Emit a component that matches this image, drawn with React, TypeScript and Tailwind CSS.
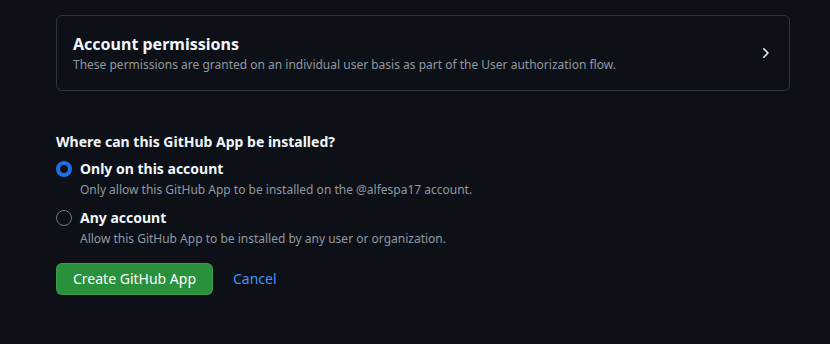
export default function App() {
    return (
        <div className="min-h-[344px] w-[830px] bg-[#0d1117] font-['Noto_Sans',sans-serif] text-[#e6edf3]">
            <div className="pl-[56px] pr-[40px] pt-[15px]">
                <div className="flex items-center justify-between rounded-md border border-[#30363d] px-4 h-[76px]">
                    <div className="flex flex-col">
                        <div className="text-base font-bold leading-6 text-[#f0f6fc]">Account permissions</div>
                        <div className="text-xs leading-[18px] text-[#9198a1]">These permissions are granted on an individual user basis as part of the User authorization flow.</div>
                    </div>
                    <svg className="w-4 h-4 text-[#f0f6fc]" viewBox="0 0 16 16" fill="currentColor">
                        <path d="M6.22 3.22a.75.75 0 0 1 1.06 0l4.25 4.25a.75.75 0 0 1 0 1.06l-4.25 4.25a.751.751 0 0 1-1.042-.018.751.751 0 0 1-.018-1.042L9.94 8 6.22 4.28a.75.75 0 0 1 0-1.06Z" />
                    </svg>
                </div>

                <div className="mt-[41px] text-sm font-bold leading-5 text-[#f0f6fc]">Where can this GitHub App be installed?</div>

                <div className="mt-[7px] flex flex-col gap-[8px]">
                    <label className="flex gap-2">
                        <span className="mt-[2px] h-4 w-4 shrink-0 rounded-full border-[4px] border-[#1f6feb] bg-[#0d1117]" />
                        <div className="flex flex-col">
                            <span className="text-sm font-bold leading-5 text-[#f0f6fc]">Only on this account</span>
                            <span className="mt-[1px] text-xs leading-5 text-[#9198a1]">Only allow this GitHub App to be installed on the @alfespa17 account.</span>
                        </div>
                    </label>
                    <label className="flex gap-2">
                        <span className="mt-[2px] h-4 w-4 shrink-0 rounded-full border border-[#6e7681] bg-[#0d1117]" />
                        <div className="flex flex-col">
                            <span className="text-sm font-bold leading-5 text-[#f0f6fc]">Any account</span>
                            <span className="mt-[1px] text-xs leading-5 text-[#9198a1]">Allow this GitHub App to be installed by any user or organization.</span>
                        </div>
                    </label>
                </div>

                <div className="mt-[14px] flex items-center gap-[20px]">
                    <button className="h-8 rounded-md border border-[#ffffff1a] bg-[#29903b] px-4 text-sm font-normal text-white">Create GitHub App</button>
                    <a className="text-sm text-[#4493f8]">Cancel</a>
                </div>
            </div>
        </div>
    )
}
